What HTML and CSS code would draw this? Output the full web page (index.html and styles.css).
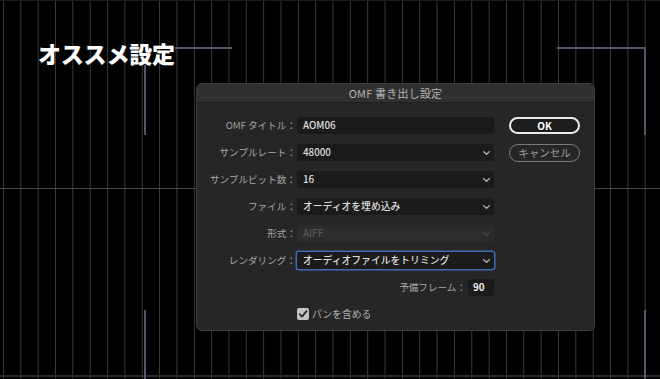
FILE: index.html
```html
<!DOCTYPE html>
<html lang="ja">
<head>
<meta charset="utf-8">
<title>OMF 書き出し設定</title>
<link rel="stylesheet" href="styles.css">
</head>
<body>
<div class="stage">
  <span class="deco tl-h"></span>
  <span class="deco tl-v"></span>
  <span class="deco tr-h"></span>
  <span class="deco tr-v"></span>
  <span class="deco bl-v"></span>
  <span class="deco br-v"></span>

  <h1 class="headline">オススメ設定</h1>

  <div class="dialog">
    <div class="titlebar">OMF 書き出し設定</div>
    <div class="form">
      <div class="label">OMF タイトル：</div>
      <div class="field input">AOM06</div>
      <button class="btn ok">OK</button>

      <div class="label">サンプルレート：</div>
      <div class="field select"><span>48000</span><svg class="chev" viewBox="0 0 7 4"><path d="M0.6 0.6 L3.5 3.3 L6.4 0.6"/></svg></div>
      <button class="btn cancel">キャンセル</button>

      <div class="label">サンプルビット数：</div>
      <div class="field select"><span>16</span><svg class="chev" viewBox="0 0 7 4"><path d="M0.6 0.6 L3.5 3.3 L6.4 0.6"/></svg></div>

      <div class="label">ファイル：</div>
      <div class="field select"><span>オーディオを埋め込み</span><svg class="chev" viewBox="0 0 7 4"><path d="M0.6 0.6 L3.5 3.3 L6.4 0.6"/></svg></div>

      <div class="label">形式：</div>
      <div class="field select disabled"><span>AIFF</span><svg class="chev" viewBox="0 0 7 4"><path d="M0.6 0.6 L3.5 3.3 L6.4 0.6"/></svg></div>

      <div class="label">レンダリング：</div>
      <div class="field select focus"><span>オーディオファイルをトリミング</span><svg class="chev" viewBox="0 0 7 4"><path d="M0.6 0.6 L3.5 3.3 L6.4 0.6"/></svg></div>

      <div class="spare">
        <span class="spare-label">予備フレーム：</span>
        <span class="field input small">90</span>
      </div>

      <label class="check">
        <span class="box"><svg viewBox="0 0 12 12"><path d="M2.6 6.2 L5 8.6 L9.6 3.2"/></svg></span>
        <span>パンを含める</span>
      </label>
    </div>
  </div>
</div>
</body>
</html>
```

FILE: styles.css
```css
html, body {
  margin: 0;
  padding: 0;
}

body {
  width: 660px;
  height: 379px;
  overflow: hidden;
  background-color: #000;
  font-family: "Noto Sans CJK JP", "Noto Sans", sans-serif;
}

.stage {
  position: relative;
  width: 660px;
  height: 379px;
  box-sizing: border-box;
  padding: 42px 0 0 38px;
  background-color: #000;
  background-image:
    linear-gradient(to bottom, transparent 188px, #4a4a4a 188px, #4a4a4a 189px, transparent 189px),
    linear-gradient(to bottom, transparent 375px, #2a2a2a 375px, #2a2a2a 377px, transparent 377px),
    linear-gradient(to bottom, #1c1c1c 0, #1c1c1c 1px, transparent 1px),
    linear-gradient(to right, #3c3c3c 0, #3c3c3c 1px, transparent 1px);
  background-size: 100% 100%, 100% 100%, 100% 100%, 17.35px 100%;
  background-position: 0 0, 0 0, 0 0, 3px 0;
  background-repeat: no-repeat, no-repeat, no-repeat, repeat-x;
}

/* decorative frame corners */
.deco {
  position: absolute;
  background: #55566a;
}
.tl-h { left: 175px; top: 47px; width: 57px; height: 2px; }
.tl-v { left: 144px; top: 65px; width: 2px; height: 70px; }
.tr-h { left: 557px; top: 47px; width: 89px; height: 2px; }
.tr-v { left: 644px; top: 47px; width: 2px; height: 88px; }
.bl-v { left: 144px; top: 310px; width: 2px; height: 69px; }
.br-v { left: 644px; top: 310px; width: 2px; height: 69px; }

.headline {
  position: relative;
  margin: 0;
  font-size: 23px;
  line-height: 23px;
  font-weight: 900;
  color: #fff;
  letter-spacing: -0.2px;
}

.dialog {
  position: relative;
  margin: 18px 0 0 158px;
  width: 399px;
  height: 248px;
  box-sizing: border-box;
  border: 1px solid #3e3e3e;
  border-radius: 6px;
  background: #262626;
  overflow: hidden;
}

.titlebar {
  height: 18px;
  line-height: 18px;
  background: #303030;
  border-bottom: 1px solid #1e1e1e;
  text-align: center;
  font-size: 11px;
  color: #b4b4b4;
  letter-spacing: 0.2px;
}

.form {
  display: grid;
  grid-template-columns: 100px 197px 86px;
  grid-auto-rows: 17px;
  row-gap: 10px;
  padding-top: 14px;
  align-items: center;
}

.label,
.spare-label {
  text-align: right;
  font-size: 9.6px;
  line-height: 17px;
  color: #a6a6a6;
  white-space: nowrap;
  padding-right: 1px;
}

.label {
  grid-column: 1;
}

.field {
  grid-column: 2;
  height: 17px;
  box-sizing: border-box;
  border-radius: 2px;
  background: #1b1b1b;
  font-size: 9.8px;
  line-height: 17px;
  color: #dedede;
  padding-left: 6px;
  font-weight: 500;
}

.select {
  display: flex;
  align-items: center;
  justify-content: space-between;
  padding-right: 4px;
}

.chev {
  width: 7px;
  height: 4px;
  fill: none;
  stroke: #bcbcbc;
  stroke-width: 1.2;
  stroke-linecap: round;
  stroke-linejoin: round;
}

.disabled {
  background: #2c2c2c;
  color: #5a5a5a;
}
.disabled .chev { stroke: #474747; }

.focus {
  box-shadow: 0 0 0 1.5px #3c6db4;
}

.btn {
  grid-column: 3;
  justify-self: end;
  width: 71px;
  box-sizing: border-box;
  border-radius: 9px;
  font-family: "Noto Sans CJK JP", "Noto Sans", sans-serif;
  padding: 0;
  text-align: center;
}

.ok {
  height: 17px;
  border: 2px solid #ececec;
  background: #1d1d1d;
  color: #fff;
  font-size: 10px;
  font-weight: 700;
  line-height: 13px;
}

.cancel {
  height: 18px;
  border: 1.5px solid #7a7a7a;
  background: #262626;
  color: #9c9c9c;
  font-size: 10.5px;
  line-height: 14px;
}

.spare {
  grid-column: 1 / 3;
  display: flex;
  justify-content: flex-end;
  align-items: center;
  gap: 1px;
}
.small {
  width: 26px;
  padding-left: 5px;
  font-weight: 700;
  color: #f0f0f0;
}

.check {
  grid-column: 2;
  display: flex;
  align-items: center;
  gap: 3px;
  margin-top: -1px;
  font-size: 9.8px;
  color: #b4b4b4;
  height: 13px;
}

.box {
  width: 12px;
  height: 12px;
  border-radius: 2px;
  background: #c4c4c4;
  display: flex;
}
.box svg {
  width: 12px;
  height: 12px;
  fill: none;
  stroke: #2a2a2a;
  stroke-width: 1.8;
  stroke-linecap: round;
  stroke-linejoin: round;
}
```
